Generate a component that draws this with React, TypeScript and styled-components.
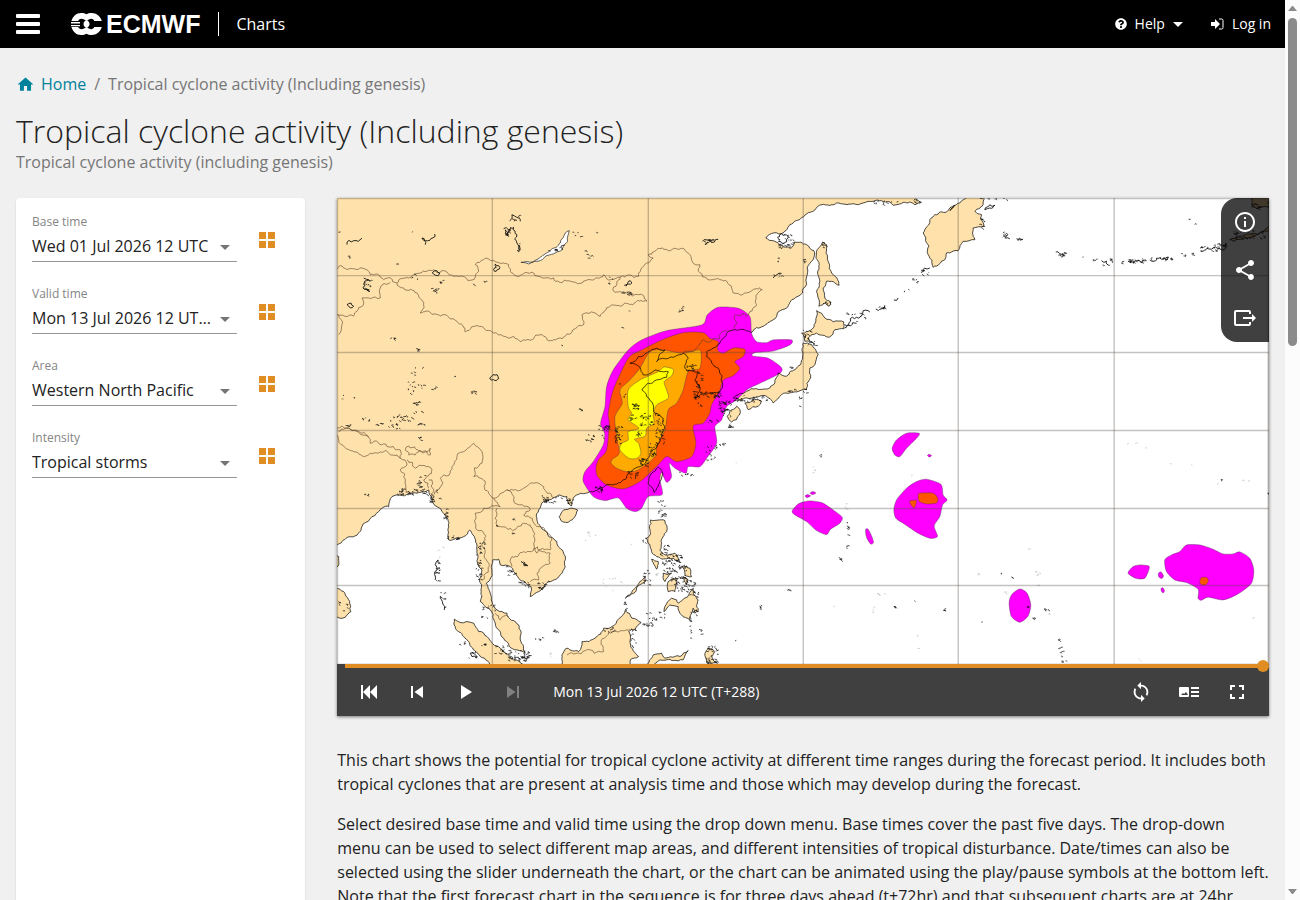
import React, { useState } from "react";
import styled, { createGlobalStyle } from "styled-components";
import { FaQuestionCircle } from "react-icons/fa";
import {
  MdHome,
  MdInfoOutline,
  MdShare,
  MdSkipPrevious,
  MdSkipNext,
  MdPlayArrow,
  MdLoop,
  MdFullscreen,
} from "react-icons/md";

/* ---------- map geometry helpers ---------- */

type Pt = [number, number];

// Chart pieces are digitised on tiles with three units to the pixel.
const tile = (ox: number, oy: number, src: string): Pt[] =>
  src
    .trim()
    .split(/\s+/)
    .map((p) => {
      const [x, y] = p.split(",").map(Number);
      return [ox + x / 3, oy + y / 3] as Pt;
    });

const NW = (s: string) => tile(337, 198, s);
const N = (s: string) => tile(640, 198, s);
const NE = (s: string) => tile(950, 198, s);
const SW = (s: string) => tile(337, 430, s);
const S = (s: string) => tile(640, 430, s);
const SE = (s: string) => tile(950, 430, s);
const C = (s: string) => tile(560, 290, s);

const random = (seed: number) => {
  let s = seed;
  return () => {
    s = (s * 1664525 + 1013904223) % 4294967296;
    return s / 4294967296;
  };
};

// Midpoint displacement gives coasts and borders their ragged edge.
// Sides that lie outside the map frame stay straight.
const ragged = (pts: Pt[], closed: boolean, amount = 0.3): string => {
  const rnd = random(Math.round(pts[0][0] * 31 + pts[0][1] * 17));
  const outside = (a: Pt, b: Pt) => (a[0] < 337 && b[0] < 337) || (a[1] < 198 && b[1] < 198);
  const split = (a: Pt, b: Pt, out: Pt[]) => {
    const dx = b[0] - a[0];
    const dy = b[1] - a[1];
    if (outside(a, b) || Math.hypot(dx, dy) < 3) {
      out.push(b);
      return;
    }
    const k = (rnd() - 0.5) * amount;
    const m: Pt = [(a[0] + b[0]) / 2 - dy * k, (a[1] + b[1]) / 2 + dx * k];
    split(a, m, out);
    split(m, b, out);
  };
  const out: Pt[] = [pts[0]];
  pts.slice(1).forEach((p, i) => split(pts[i], p, out));
  if (closed) split(pts[pts.length - 1], pts[0], out);
  return "M" + out.map((p) => p[0].toFixed(1) + " " + p[1].toFixed(1)).join("L") + (closed ? "Z" : "");
};

// Closed curve that passes through every contour point.
const smooth = (pts: Pt[]): string => {
  const n = pts.length;
  const at = (i: number) => pts[(i + n) % n];
  const f = (x: number, y: number) => `${x.toFixed(1)} ${y.toFixed(1)}`;
  let d = `M${f(pts[0][0], pts[0][1])}`;
  for (let i = 0; i < n; i++) {
    const [p0, p1, p2, p3] = [at(i - 1), at(i), at(i + 1), at(i + 2)];
    const c1 = f(p1[0] + (p2[0] - p0[0]) / 8, p1[1] + (p2[1] - p0[1]) / 8);
    const c2 = f(p2[0] - (p3[0] - p1[0]) / 8, p2[1] - (p3[1] - p1[1]) / 8);
    d += `C${c1} ${c2} ${f(p2[0], p2[1])}`;
  }
  return d + "Z";
};

// Each group is x, y, spread x, spread y and number of marks, in tile units.
const specks = (ox: number, oy: number, groups: number[][]): string => {
  let d = "";
  groups.forEach(([x, y, sx, sy, n]) => {
    const rnd = random(x * 13 + y * 7 + n);
    for (let i = 0; i < n; i++) {
      const px = ox + (x + (rnd() - 0.5) * 2 * sx) / 3;
      const py = oy + (y + (rnd() - 0.5) * 2 * sy) / 3;
      d += `M${px.toFixed(1)} ${py.toFixed(1)}l${(rnd() * 2 + 0.4).toFixed(1)} ${(rnd() * 2 - 1).toFixed(1)}`;
      d += `l${(rnd() * 2 - 1).toFixed(1)} ${(rnd() * 1.4).toFixed(1)}`;
    }
  });
  return d;
};

/* ---------- map data ---------- */

const mainland: Pt[] = [
  ...N("378,120 430,105 460,75 500,48 546,20 590,15 640,17 700,10 750,12 760,22 825,20 840,12 825,-6"),
  [334, 195],
  [334, 547],
  ...SW(
    "0,345 15,335 50,320 75,290 125,245 155,230 165,200 190,196 240,190 275,180 285,205 300,230 320,250 335,290 335,330 380,320 398,300 408,315 420,360 435,420 432,480 430,515 465,545 475,580 500,625 540,660 565,670 550,630 545,585 510,550 480,540 460,490 448,460 465,420 467,390 485,388 490,405 520,410 530,425 545,445 582,470 580,500 605,485 630,458 670,435 685,410 680,370 660,335 620,300 600,265 605,240 620,215 665,195 690,200",
  ),
  ...C(
    "20,625 35,648 40,625 90,605 120,595 160,585 200,565 240,530 270,490 300,455 315,415 310,385 285,370 280,345 260,320 246,300 290,270 320,262 325,245 285,240 250,255 240,232 210,220 235,200 290,175 315,180 290,215 370,190 385,205 375,235 415,245 405,270 420,290 405,325 480,305 488,280 475,235 440,200 440,185 480,160 500,130 540,118 575,127",
  ),
  ...N("370,385 400,365 440,330 465,300 500,260 502,210 520,185 522,158 500,140 465,132 455,148 420,140 400,128"),
];

const kamchatka: Pt[] = [
  ...N("855,95 870,65 885,50 920,42 945,22"),
  ...NE("0,38 30,15 55,-6 105,-6 100,15 75,40 95,50 92,60 102,85 70,90 68,105 75,125 40,130 25,158 0,165"),
  ...N("920,165 915,185 880,208 865,170 858,120 850,105"),
];

const islands: Pt[][] = [
  kamchatka,
  N("530,338 555,360 580,372 612,372 612,392 585,395 568,418 530,405 505,420 510,430 495,430 485,405 520,390 528,370"),
  N(
    "490,435 515,440 535,470 525,500 510,510 512,540 500,575 470,582 450,585 425,590 400,615 385,600 380,595 350,598 320,600 300,605 280,600 320,580 350,572 390,570 405,555 415,525 440,535 470,510 488,480",
  ),
  N("315,615 345,605 365,610 355,625 325,635"),
  N("270,640 290,625 300,635 290,665 275,672 262,655"),
  N("532,155 548,132 560,140 565,190 580,230 598,262 560,250 550,270 555,300 572,312 568,325 555,315 537,325 535,300 540,250 538,200 528,180"),
  NE("905,-6 975,-6 975,30 920,32 905,20"),
  NE("840,125 880,112 960,85 960,98 900,118 850,130"),
  SW("667,260 680,240 705,235 722,240 710,265 690,278 672,272"),
  SW("-6,475 20,485 40,525 42,545 25,562 -6,560"),
  SW("-6,370 5,380 5,405 -6,415"),
  SW("352,568 410,580 450,620 490,655 530,690 570,712 470,712 430,680 380,620 355,590"),
  SW("675,675 690,655 725,665 735,635 775,625 800,595 825,590 865,542 885,565 913,578 895,598 875,605 880,640 905,680 880,690 880,712 680,712"),
  SW("865,505 895,475 925,438 925,455 890,490"),
  C("265,580 275,550 295,532 307,545 300,575 283,608"),
  S("32,270 75,272 80,305 65,340 60,360 75,375 105,370 115,395 85,385 50,380 35,365 20,325 32,310"),
  S("35,388 55,395 50,418"),
  S("70,430 95,430 75,455"),
  S("85,455 115,445 105,485 85,485"),
  S("125,410 150,415 155,440 135,435"),
  S("130,440 145,450 140,465"),
  S("75,530 95,505 110,510 115,520 160,475 175,510 175,545 165,550 160,535 150,570 125,555 115,530 90,525 72,545"),
  S("20,708 40,675 65,670 75,685 120,680 145,662 130,690 100,692 60,690 35,708"),
  S("205,655 225,665 215,680 230,698 200,698 195,670"),
];

const lakes: Pt[][] = [
  NW("552,193 580,193 610,178 640,158 670,135 685,105 697,98 692,130 675,155 640,170 600,190 575,198"),
];

const borders: Pt[][] = [
  [
    ...NW(
      "0,213 15,204 30,215 75,210 100,230 140,245 160,240 180,255 215,240 250,225 290,215 330,222 370,235 415,237 425,220 415,200 440,185 480,193 515,200 520,220 555,230 590,225 650,240 655,250 710,252 760,245 800,230 850,237 905,235 920,205",
    ),
    ...N("20,195 40,180 25,170 60,152 110,152 150,170 180,200 200,240 240,245 275,270 280,285 320,285 350,272 367,275 350,320 320,355 305,345"),
  ],
  NW(
    "180,255 200,270 240,285 258,310 250,345 320,350 360,370 385,402 470,405 530,415 580,427 620,415 690,408 740,380 735,350 790,355 860,318 930,310",
  ),
  NW("850,237 830,280 870,285 905,290 930,308"),
  NW("160,253 130,270 130,300 100,302 75,300 60,340 0,350"),
  NW("5,350 15,380 5,410"),
  NW("0,690 30,690 60,700 95,718"),
  C("370,190 430,150 480,145 520,120 525,75 550,70"),
  SW("5,5 45,0 100,40 190,60 190,85 100,70 5,30 0,15"),
  SW("205,60 215,48 280,55 280,75 215,75 205,60"),
  SW("190,85 210,105 190,120 205,150 208,185"),
  SW("210,90 235,115 285,120 260,150 275,175"),
  SW("290,205 310,145 345,110 360,80 410,40 435,65 435,100 410,140 445,160 455,190 470,205"),
  SW("275,150 285,150 290,185 285,200"),
  SW("470,205 490,230 440,235 415,250 415,280 440,310 435,350 455,400 440,450"),
  SW("470,205 510,180 530,210 580,240 560,255 600,290 640,340 640,360 600,370 590,340 560,280 490,290 480,235"),
  SW("510,180 560,175 590,160 620,170 650,205"),
  SW("525,410 525,380 560,365 640,370 640,400 600,430 605,450 580,455"),
  SW("690,675 800,665 835,600 880,600"),
  SW("475,550 490,570 515,560"),
];

const darkLines: Pt[][] = [
  NW("30,140 50,128 75,121"),
  NW("293,108 255,120 265,140"),
  NW("500,92 530,88 540,110 540,135 548,158"),
  NW("505,95 515,115 522,95"),
  NW("518,68 525,50 550,70"),
  NW("80,240 98,250 78,270 98,282"),
  NW("286,225 300,218 308,225 295,232 286,225"),
  NW("470,215 475,198 485,203 478,220 470,215"),
  NW("458,540 468,530 485,542 470,545 458,540"),
  NW("30,320 42,315 50,325 40,330 30,320"),
  NW("862,262 880,248 885,255 868,265"),
  SW("552,395 562,408 572,408 560,395"),
  SW("400,670 412,672 418,685 405,680 400,670"),
  N("188,130 210,128 235,124"),
  N("195,140 210,130"),
  N("400,240 425,226"),
  N("614,380 650,358 690,342"),
  N("614,390 650,376"),
  N("708,333 735,322"),
  N("762,306 775,300"),
  N("845,225 870,210"),
  N("412,118 430,112 445,120 430,138 415,130"),
  NE("105,35 120,20 135,22 120,30 105,35"),
  NE("160,110 180,122"),
  NE("200,122 214,128"),
  NE("318,162 340,168 335,178"),
  NE("455,188 480,202"),
  NE("535,190 560,188 588,186"),
  NE("600,186 630,180 655,184"),
  NE("755,160 790,150 830,135"),
  SW("295,450 300,420 303,390"),
  SW("310,500 322,540"),
];

const marks = [
  specks(337, 198, [
    [225, 102, 1, 1, 1], [180, 195, 4, 5, 2], [4, 103, 2, 2, 1], [32, 176, 5, 3, 2], [515, 105, 10, 10, 12],
    [544, 148, 6, 10, 8], [535, 60, 12, 8, 5], [90, 262, 10, 20, 12], [310, 250, 12, 4, 4], [290, 278, 12, 8, 8],
    [740, 110, 40, 8, 5], [745, 170, 20, 12, 4], [405, 260, 3, 2, 1], [443, 250, 4, 2, 2], [240, 235, 20, 10, 3],
    [165, 420, 7, 3, 4], [240, 455, 4, 8, 4], [220, 522, 20, 14, 4], [255, 512, 2, 2, 1], [352, 537, 3, 2, 1],
    [240, 575, 28, 24, 12], [290, 572, 14, 6, 3], [407, 583, 8, 3, 5], [235, 618, 9, 5, 7], [35, 600, 22, 8, 3],
    [150, 675, 40, 18, 14], [85, 665, 18, 5, 5], [200, 660, 22, 8, 12], [250, 680, 10, 5, 5], [250, 650, 30, 12, 4],
    [30, 684, 8, 3, 4], [730, 634, 7, 4, 4], [672, 443, 3, 2, 1], [853, 388, 3, 2, 1], [875, 338, 3, 2, 1],
    [645, 158, 12, 4, 6], [675, 148, 8, 6, 5], [775, 710, 25, 10, 6], [830, 245, 20, 14, 4], [878, 285, 6, 5, 4],
  ]),
  specks(640, 198, [
    [205, 130, 14, 6, 10], [410, 190, 4, 10, 2], [412, 232, 12, 6, 4], [120, 330, 8, 12, 3], [435, 125, 28, 16, 16],
    [495, 188, 8, 5, 5], [430, 145, 20, 6, 8], [550, 140, 6, 10, 5], [560, 316, 12, 6, 6], [650, 358, 30, 14, 10],
    [720, 330, 16, 4, 7], [825, 250, 10, 10, 5], [855, 222, 12, 8, 6], [800, 280, 8, 8, 2], [515, 437, 12, 6, 10],
    [500, 410, 12, 14, 10], [451, 510, 5, 5, 3], [470, 580, 30, 8, 8], [480, 610, 6, 16, 4], [330, 602, 50, 8, 26],
    [255, 630, 22, 22, 34], [270, 685, 8, 10, 7], [220, 668, 16, 6, 5], [170, 592, 12, 12, 14], [215, 590, 28, 8, 24],
    [175, 545, 8, 26, 14], [150, 510, 14, 10, 14], [175, 620, 10, 4, 3], [740, 15, 40, 6, 10], [830, 10, 12, 6, 8],
  ]),
  specks(950, 198, [
    [170, 113, 12, 8, 6], [208, 124, 8, 4, 4], [330, 168, 16, 6, 8], [397, 179, 2, 1, 1], [433, 186, 6, 3, 3],
    [470, 192, 16, 10, 6], [518, 195, 6, 6, 3], [560, 189, 28, 5, 18], [625, 182, 28, 4, 10], [665, 180, 4, 3, 3],
    [710, 170, 20, 5, 5], [780, 152, 30, 10, 14], [815, 140, 14, 6, 8], [725, 72, 10, 8, 2], [900, 110, 50, 14, 26],
    [930, 20, 26, 12, 14], [95, 70, 8, 22, 8], [130, 2, 40, 3, 8],
  ]),
  specks(337, 430, [
    [248, 27, 8, 6, 4], [86, 197, 8, 3, 3], [225, 185, 45, 8, 34], [245, 165, 6, 14, 8], [292, 200, 14, 22, 14],
    [322, 252, 8, 14, 10], [350, 325, 20, 6, 12], [300, 420, 6, 36, 14], [315, 510, 8, 26, 6], [424, 400, 8, 62, 26],
    [452, 545, 20, 20, 12], [520, 425, 14, 14, 8], [560, 460, 18, 10, 10], [618, 465, 18, 14, 14], [635, 212, 18, 6, 16],
    [700, 214, 14, 10, 9], [528, 268, 5, 3, 3], [478, 286, 3, 3, 2], [525, 312, 3, 2, 2], [440, 350, 4, 14, 4],
    [655, 608, 7, 7, 6], [605, 630, 10, 6, 4], [375, 640, 8, 5, 5], [405, 672, 12, 12, 5], [438, 642, 6, 5, 5],
    [495, 660, 24, 14, 14], [545, 678, 32, 16, 48], [840, 20, 12, 20, 12], [755, 28, 10, 5, 5],
    [810, 600, 18, 6, 8], [885, 625, 10, 40, 12], [20, 525, 18, 18, 6], [865, 530, 5, 16, 6], [250, 160, 14, 24, 4],
    [922, 330, 6, 10, 4], [650, 200, 40, 4, 6],
  ]),
  specks(560, 290, [
    [300, 425, 14, 40, 22], [265, 390, 30, 18, 26], [230, 350, 16, 8, 16], [175, 432, 12, 24, 18], [130, 415, 16, 8, 18],
    [248, 520, 14, 14, 18], [215, 553, 16, 9, 12], [275, 480, 10, 18, 16], [215, 385, 14, 10, 6], [195, 320, 6, 6, 2],
    [240, 432, 12, 6, 8], [455, 490, 18, 22, 14], [370, 552, 26, 6, 8], [175, 283, 2, 2, 1], [115, 598, 12, 10, 14],
    [300, 670, 14, 14, 7], [360, 55, 8, 12, 3], [485, 460, 10, 6, 4], [200, 8, 16, 6, 6],
  ]),
  specks(640, 430, [
    [60, 240, 12, 28, 7], [70, 360, 12, 14, 12], [100, 385, 26, 16, 24], [85, 410, 20, 20, 20], [115, 430, 24, 26, 34],
    [120, 468, 18, 14, 18], [150, 465, 14, 20, 12], [20, 440, 14, 26, 10], [45, 560, 30, 14, 14], [20, 582, 16, 8, 10],
    [150, 600, 3, 50, 7], [181, 605, 3, 10, 4], [360, 530, 6, 10, 4], [445, 480, 3, 2, 2], [623, 290, 3, 28, 5],
    [620, 350, 4, 4, 3], [600, 388, 4, 6, 4], [540, 70, 2, 14, 3], [762, 530, 5, 2, 3], [822, 512, 3, 1, 1],
    [912, 541, 4, 2, 3], [215, 675, 16, 26, 26], [215, 650, 10, 8, 5], [286, 632, 3, 2, 1],
    [162, 490, 14, 10, 8], [160, 545, 10, 14, 6],
  ]),
  specks(950, 430, [
    [812, 148, 3, 2, 2], [955, 191, 3, 2, 3], [185, 441, 3, 1, 1], [154, 430, 2, 1, 1],
    [290, 538, 10, 3, 4], [250, 563, 3, 3, 2], [95, 578, 2, 2, 1], [228, 530, 4, 2, 2], [324, 630, 4, 2, 2],
    [330, 665, 5, 16, 6], [342, 695, 8, 3, 3],
  ]),
];

const faintMarks = [
  specks(337, 430, [[745, 320, 40, 14, 5], [820, 460, 30, 20, 8], [640, 670, 6, 12, 3], [310, 370, 10, 20, 3], [880, 345, 3, 3, 1]]),
  specks(640, 430, [[520, 120, 4, 12, 3], [610, 230, 10, 10, 3], [720, 500, 14, 10, 4], [580, 530, 2, 2, 1], [45, 440, 6, 8, 4], [700, 540, 8, 10, 3], [833, 640, 2, 30, 3], [285, 98, 3, 2, 1], [815, 135, 2, 2, 1]]),
  specks(950, 430, [[545, 43, 16, 3, 2], [587, 54, 3, 1, 1], [908, 565, 3, 1, 1], [680, 100, 50, 6, 2], [165, 490, 12, 4, 3], [255, 450, 16, 26, 6], [80, 433, 4, 4, 2], [300, 550, 6, 12, 3], [840, 155, 70, 10, 3], [235, 360, 2, 2, 1], [570, 690, 4, 6, 2]]),
];

const low: Pt[][] = [
  C(
    "70,575 75,545 100,515 130,465 134,430 122,400 135,350 140,290 160,240 205,180 245,150 320,122 425,105 442,75 475,52 535,55 570,80 575,130 590,155 620,158 640,150 695,150 690,165 640,183 585,188 578,198 625,205 664,232 660,250 600,280 560,300 530,330 500,350 485,390 465,410 470,460 440,505 420,530 385,530 378,550 345,535 328,520 335,560 320,577 305,548 300,570 307,614 265,620 245,655 225,665 200,655 175,624 135,632 100,620",
  ),
  S("457,243 475,222 505,213 545,218 580,240 607,262 600,280 572,298 560,314 530,302 500,275 465,255"),
  S("757,55 770,30 800,10 838,10 830,25 800,55 780,80 765,75"),
  S("863,77 868,73 875,77 869,81"),
  S("496,198 503,194 512,198 501,203"),
  S("511,190 518,185 528,189 518,194"),
  S("762,240 770,210 800,175 830,155 860,148 903,163 910,195 922,210 908,225 900,260 883,288 893,320 870,325 835,310 790,280 768,265"),
  S("677,300 684,297 695,318 701,338 692,342 680,322"),
  SE("645,390 665,375 690,365 710,345 750,345 790,358 820,372 850,372 870,366 900,385 912,420 905,460 865,492 820,510 775,502 755,511 745,505 745,478 710,458 675,450 650,425"),
  SE("535,430 550,410 570,405 597,408 597,420 585,445 560,446"),
  SE("626,430 634,426 641,438 636,446 627,441"),
  SE("634,476 640,474 644,483 640,489 635,484"),
  SE("178,520 185,495 210,477 232,490 243,525 235,558 210,577 185,560"),
];

const medium: Pt[][] = [
  C(
    "108,535 115,510 140,480 148,400 145,370 160,300 205,205 245,180 310,148 370,128 430,128 450,145 475,155 473,180 490,190 520,174 555,178 550,200 525,215 540,235 520,257 490,270 480,300 455,345 450,370 430,400 400,408 408,460 395,500 350,515 320,500 290,530 240,575 190,597 140,585 113,560",
  ),
  S("835,200 839,190 880,190 894,205 890,219 860,222 838,215"),
  S("810,213 830,212 823,234 812,222"),
  SE("750,454 755,443 771,443 776,454 767,465 753,463"),
];

const high: Pt[][] = [
  C(
    "154,520 157,508 178,490 170,440 165,380 187,340 180,300 210,270 240,235 270,185 310,180 370,190 421,181 420,235 385,245 370,300 350,340 325,360 315,420 290,470 286,500 235,540 200,545 170,535",
  ),
];

const veryHigh: Pt[][] = [
  C(
    "205,300 240,270 295,245 312,231 340,238 335,258 313,275 320,300 325,325 290,345 280,375 282,400 260,415 256,438 224,448 236,460 243,490 231,505 207,505 180,480 185,460 205,450 205,425 237,415 205,390 215,370 205,350",
  ),
];

const levels: { colour: string; shapes: Pt[][] }[] = [
  { colour: "#ff00ff", shapes: low },
  { colour: "#ff5500", shapes: medium },
  { colour: "#ffaa00", shapes: high },
  { colour: "#ffff00", shapes: veryHigh },
];

const meridians = [492, 648, 803, 958, 1114];
const parallels = [276, 353, 431, 509, 586];

function CycloneMap() {
  const coast = [mainland, ...islands].map((p) => ragged(p, true)).join("");
  return (
    <MapSvg viewBox="337 198 932 466" role="img" aria-label="Map of tropical cyclone activity, Western North Pacific">
      <rect x="337" y="198" width="932" height="466" fill="#fff" />
      <path d={coast} fill="#ffe2ab" />
      <path d={lakes.map((p) => ragged(p, true)).join("")} fill="#fff" stroke="#222" strokeWidth="0.7" />
      {levels.map(({ colour, shapes }) => (
        <path key={colour} d={shapes.map(smooth).join("")} fill={colour} stroke="#4a2a50" strokeWidth="0.4" />
      ))}
      <path d={coast} fill="none" stroke="#000" strokeWidth="0.7" />
      <g fill="none" strokeLinejoin="round">
        <path d={borders.map((p) => ragged(p, false, 0.5)).join("")} stroke="#5a3f2a" strokeWidth="0.6" />
        <path d={darkLines.map((p) => ragged(p, false, 0.7)).join("")} stroke="#111" strokeWidth="0.9" />
        <path d={marks.join("")} stroke="#111" strokeWidth="0.7" />
        <path d={faintMarks.join("")} stroke="#aaa" strokeWidth="0.5" />
      </g>
      <g stroke="#50463c" strokeOpacity="0.33" strokeWidth="1.400">
        {meridians.map((x) => (
          <line key={x} x1={x + 0.4} x2={x + 0.4} y1="198" y2="664" />
        ))}
        {parallels.map((y) => (
          <line key={y} x1="337" x2="1269" y1={y - 0.4} y2={y - 0.4} />
        ))}
        <path d="M337.5 664V198.5H1268.5V664" fill="none" />
      </g>
    </MapSvg>
  );
}

/* ---------- page parts ---------- */

const Global = createGlobalStyle`
  *, *::before, *::after { box-sizing: border-box; }
  body {
    margin: 0;
    background: #f0f0f0;
    color: #222;
    font-family: "Open Sans", "Noto Sans", sans-serif;
    font-size: 16px;
    line-height: 24px;
  }
`;

const Viewport = styled.div`
  display: grid;
  grid-template-columns: minmax(0, 1fr) 15px;
  height: 100vh;
  overflow: hidden;
`;

const Page = styled.div`
  height: 100vh;
  overflow: hidden;
`;

const ScrollRail = styled.div`
  display: flex;
  flex-direction: column;
  align-items: center;
  justify-content: space-between;
  height: 100vh;
  padding: 6px 0;
  background: #fcfcfc;
`;

const ScrollThumb = styled.div`
  width: 9px;
  margin: 7px 0 auto;
  flex: 0 1 328px;
  border-radius: 5px;
  background: #8b8b8b;
`;

const TopBar = styled.header`
  display: flex;
  align-items: center;
  height: 48px;
  padding: 0 14px 0 16px;
  background: #000;
  color: #fff;
`;

const PlainButton = styled.button`
  display: flex;
  align-items: center;
  justify-content: center;
  padding: 0;
  border: 0;
  background: none;
  color: inherit;
  font: inherit;
  cursor: pointer;
`;

const Logo = styled.a`
  display: flex;
  align-items: center;
  gap: 4px;
  margin-left: 31px;
  padding-right: 18px;
  height: 24px;
  border-right: 1px solid #fff;
  color: #fff;
  text-decoration: none;
  font: bold 25px/24px "Liberation Sans", Arial, sans-serif;
`;

const SiteName = styled.a`
  margin-left: 17px;
  color: #fff;
  text-decoration: none;
`;

const UserNav = styled.nav`
  display: flex;
  gap: 28px;
  margin-left: auto;
  font-size: 14px;
`;

const HelpButton = styled(PlainButton)`
  gap: 8px;
`;

const LoginLink = styled.a`
  display: flex;
  align-items: center;
  gap: 8px;
  color: inherit;
  text-decoration: none;
`;

const Intro = styled.div`
  padding: 24px 16px;
`;

const Breadcrumb = styled.nav`
  display: flex;
  align-items: center;
  gap: 8px;
  color: #767676;
`;

const HomeLink = styled.a`
  display: flex;
  align-items: center;
  gap: 6px;
  color: #00819c;
  text-decoration: none;
`;

const Title = styled.h1`
  margin: 16px 0 0;
  font-size: 32px;
  line-height: 38px;
  font-weight: 300;
`;

const Subtitle = styled.p`
  margin: 0;
  color: #767676;
`;

const Columns = styled.div`
  display: grid;
  grid-template-columns: minmax(0, 1fr) minmax(0, 3fr);
`;

const SideColumn = styled.div`
  display: flex;
  padding: 0 16px;
`;

const FilterCard = styled.form`
  display: flex;
  flex-direction: column;
  gap: 24px;
  flex: 1;
  min-width: 0;
  padding: 16px;
  border-radius: 4px;
  background: #fff;
  box-shadow: 0 1px 2px rgba(0, 0, 0, 0.15);
`;

const FilterRow = styled.div`
  display: flex;
  align-items: flex-end;
  gap: 8px;
`;

const Field = styled.div`
  position: relative;
  display: flex;
  flex-direction: column;
  flex: 1;
  min-width: 0;
`;

const FieldLabel = styled.label`
  font-size: 12px;
  line-height: 16px;
  color: #858585;
`;

const Select = styled.select`
  appearance: none;
  width: 100%;
  height: 32px;
  padding: 0 25px 0 0;
  border: 0;
  border-bottom: 1px solid #949494;
  border-radius: 0;
  background: transparent;
  color: #222;
  font: inherit;
  text-overflow: ellipsis;
  outline: none;
`;

const SelectArrow = styled.svg`
  position: absolute;
  right: 7px;
  bottom: 12px;
  fill: #757575;
  pointer-events: none;
`;

const GridButton = styled(PlainButton)`
  width: 44px;
  height: 44px;
  color: #e08e24;
`;

const MainColumn = styled.main`
  padding: 0 16px;
`;

const Viewer = styled.section`
  position: relative;
  margin-bottom: 32px;
  background: #404040;
  color: #fff;
  box-shadow: 0 1px 3px rgba(0, 0, 0, 0.5);
`;

const MapSvg = styled.svg`
  display: block;
  width: 100%;
`;

const MapTools = styled.div`
  position: absolute;
  top: 0;
  right: 0;
  border-radius: 16px 0 0 16px;
  background: rgba(0, 0, 0, 0.75);
`;

const ToolButton = styled(PlainButton)`
  width: 48px;
  height: 48px;

  &:disabled {
    color: #808080;
  }
`;

const TimeSlider = styled.input`
  appearance: none;
  display: block;
  width: calc(100% - 8px);
  height: 4px;
  margin: 0 0 0 8px;
  background: linear-gradient(#e08e24, #e08e24) no-repeat 0 0 / calc(100% - 6px) 100%;

  &::-webkit-slider-thumb {
    appearance: none;
    width: 12px;
    height: 12px;
    border-radius: 50%;
    background: #e08e24;
  }
`;

const Player = styled.div`
  display: flex;
  align-items: center;
  height: 48px;
  padding: 0 8px;
  font-size: 14px;
`;

const StepLabel = styled.span`
  margin: 0 auto 0 16px;
`;

const Text = styled.p`
  margin: 0 0 16px;
`;

const filters = [
  { id: "base", label: "Base time", value: "Wed 01 Jul 2026 12 UTC" },
  { id: "valid", label: "Valid time", value: "Mon 13 Jul 2026 12 UTC (T+288)" },
  { id: "area", label: "Area", value: "Western North Pacific" },
  { id: "intensity", label: "Intensity", value: "Tropical storms" },
];

export default function App() {
  const [step, setStep] = useState(9);
  return (
    <Viewport>
      <Global />
      <Page>
        <TopBar>
          <PlainButton aria-label="Menu">
            <svg width="24" height="20" fill="currentColor">
              <rect width="24" height="4" rx="1" />
              <rect y="8" width="24" height="4" rx="1" />
              <rect y="16" width="24" height="4" rx="1" />
            </svg>
          </PlainButton>
          <Logo href="#">
            <svg width="31" height="22" viewBox="0 0 31 22" fill="#fff" aria-hidden="true">
              <path d="M10 0C12.600 0 14 .4 15.500 1.300C17 .4 18.400 0 20.500 0C25.500 0 29.500 3.300 30.800 8H23.300C22.600 6.600 21.600 5.800 20.200 5.800C18.400 5.800 17.300 6.700 15.500 8.300C13.700 6.700 12.400 5.800 10.600 5.800C9 5.800 7.900 6.700 7.100 8H.5C1.800 3.300 5.300 0 10 0Z" />
              <path d="M10 22C12.600 22 14 21.600 15.500 20.700C17 21.600 18.400 22 20.500 22C25.500 22 29.500 18.700 30.800 14H23.300C22.600 15.400 21.600 16.200 20.200 16.200C18.400 16.200 17.300 15.300 15.500 13.700C13.700 15.300 12.400 16.200 10.600 16.200C9 16.200 7.900 15.300 7.100 14H.5C1.800 18.700 5.300 22 10 22Z" />
              <path d="M0 9H9V10.500H0ZM0 12H9V13.200H0Z" />
              <path d="M12.500 11C12.500 9 14 7.500 15.500 7.500C17 7.500 18.500 9 18.500 11C18.500 13 17 14.500 15.500 14.500C14 14.500 12.500 13 12.500 11Z" />
            </svg>
            ECMWF
          </Logo>
          <SiteName href="#">Charts</SiteName>
          <UserNav>
            <HelpButton>
              <FaQuestionCircle size={12} />
              Help
              <svg width="10" height="5" fill="currentColor">
                <path d="M0 0H10L5 5Z" />
              </svg>
            </HelpButton>
            <LoginLink href="#">
              <svg width="13" height="12" viewBox="0 0 13 12" fill="currentColor">
                <path d="M0 4H4V1L9 6L4 11V8H0Z" />
                <path d="M8 1H10.500Q12 1 12 2.500V9.500Q12 11 10.500 11H8" fill="none" stroke="currentColor" />
              </svg>
              Log in
            </LoginLink>
          </UserNav>
        </TopBar>

        <Intro>
          <Breadcrumb aria-label="Breadcrumb">
            <HomeLink href="#">
              <MdHome size={19} />
              Home
            </HomeLink>
            <span>/</span>
            <span>Tropical cyclone activity (Including genesis)</span>
          </Breadcrumb>
          <Title>Tropical cyclone activity (Including genesis)</Title>
          <Subtitle>Tropical cyclone activity (including genesis)</Subtitle>
        </Intro>

        <Columns>
          <SideColumn>
            <FilterCard>
              {filters.map((f) => (
                <FilterRow key={f.id}>
                  <Field>
                    <FieldLabel htmlFor={f.id}>{f.label}</FieldLabel>
                    <Select id={f.id}>
                      <option>{f.value}</option>
                    </Select>
                    <SelectArrow width="10" height="5">
                      <path d="M0 0H10L5 5Z" />
                    </SelectArrow>
                  </Field>
                  <GridButton type="button" aria-label={`Show all: ${f.label}`}>
                    <svg width="16" height="16" fill="currentColor">
                      <path d="M0 0H7V7H0ZM9 0H16V7H9ZM0 9H7V16H0ZM9 9H16V16H9Z" />
                    </svg>
                  </GridButton>
                </FilterRow>
              ))}
            </FilterCard>
          </SideColumn>

          <MainColumn>
            <Viewer>
              <CycloneMap />
              <MapTools>
                <ToolButton aria-label="Information">
                  <MdInfoOutline size={24} />
                </ToolButton>
                <ToolButton aria-label="Share">
                  <MdShare size={24} />
                </ToolButton>
                <ToolButton aria-label="Export">
                  <svg width="24" height="18" viewBox="0 0 24 18" fill="none" stroke="currentColor" strokeWidth="2">
                    <path d="M17 5V3Q17 2 16 2H3Q2 2 2 3V15Q2 16 3 16H16Q17 16 17 15V13" />
                    <path d="M10 9H20" />
                    <path d="M19 5L23 9L19 13Z" fill="currentColor" stroke="none" />
                  </svg>
                </ToolButton>
              </MapTools>
              <TimeSlider
                type="range"
                aria-label="Forecast step"
                min={0}
                max={9}
                value={step}
                onChange={(e) => setStep(Number(e.target.value))}
              />
              <Player>
                <ToolButton aria-label="First">
                  <svg width="18" height="14" fill="currentColor">
                    <path d="M1 0H3V14H1ZM10 0V14L3 7ZM17 0V14L10 7Z" />
                  </svg>
                </ToolButton>
                <ToolButton aria-label="Previous">
                  <MdSkipPrevious size={24} />
                </ToolButton>
                <ToolButton aria-label="Play">
                  <MdPlayArrow size={24} />
                </ToolButton>
                <ToolButton aria-label="Next" disabled>
                  <MdSkipNext size={24} />
                </ToolButton>
                <StepLabel>Mon 13 Jul 2026 12 UTC (T+288)</StepLabel>
                <ToolButton aria-label="Loop">
                  <MdLoop size={22} />
                </ToolButton>
                <ToolButton aria-label="Legend">
                  <svg width="20" height="10" fill="currentColor" fillRule="evenodd">
                    <path d="M1 0H9Q10 0 10 1V9Q10 10 9 10H1Q0 10 0 9V1Q0 0 1 0ZM2 8H9L7 5L5 7L4 6Z" />
                    <path d="M12 0H20V2H12ZM12 4H20V6H12ZM12 8H20V10H12Z" />
                  </svg>
                </ToolButton>
                <ToolButton aria-label="Full screen">
                  <MdFullscreen size={24} />
                </ToolButton>
              </Player>
            </Viewer>
            <Text>
              This chart shows the potential for tropical cyclone activity at different time ranges during the forecast
              period. It includes both tropical cyclones that are present at analysis time and those which may develop
              during the forecast.
            </Text>
            <Text>
              Select desired base time and valid time using the drop down menu. Base times cover the past five days. The
              drop-down menu can be used to select different map areas, and different intensities of tropical
              disturbance. Date/times can also be selected using the slider underneath the chart, or the chart can be
              animated using the play/pause symbols at the bottom left. Note that the first forecast chart in the
              sequence is for three days ahead (t+72hr) and that subsequent charts are at 24hr
            </Text>
          </MainColumn>
        </Columns>
      </Page>
      <ScrollRail aria-hidden="true">
        <svg width="9" height="5" fill="#8b8b8b">
          <path d="M0 5H9L5 0H4Z" />
        </svg>
        <ScrollThumb />
        <svg width="9" height="5" fill="#8b8b8b">
          <path d="M0 0H9L5 5H4Z" />
        </svg>
      </ScrollRail>
    </Viewport>
  );
}
